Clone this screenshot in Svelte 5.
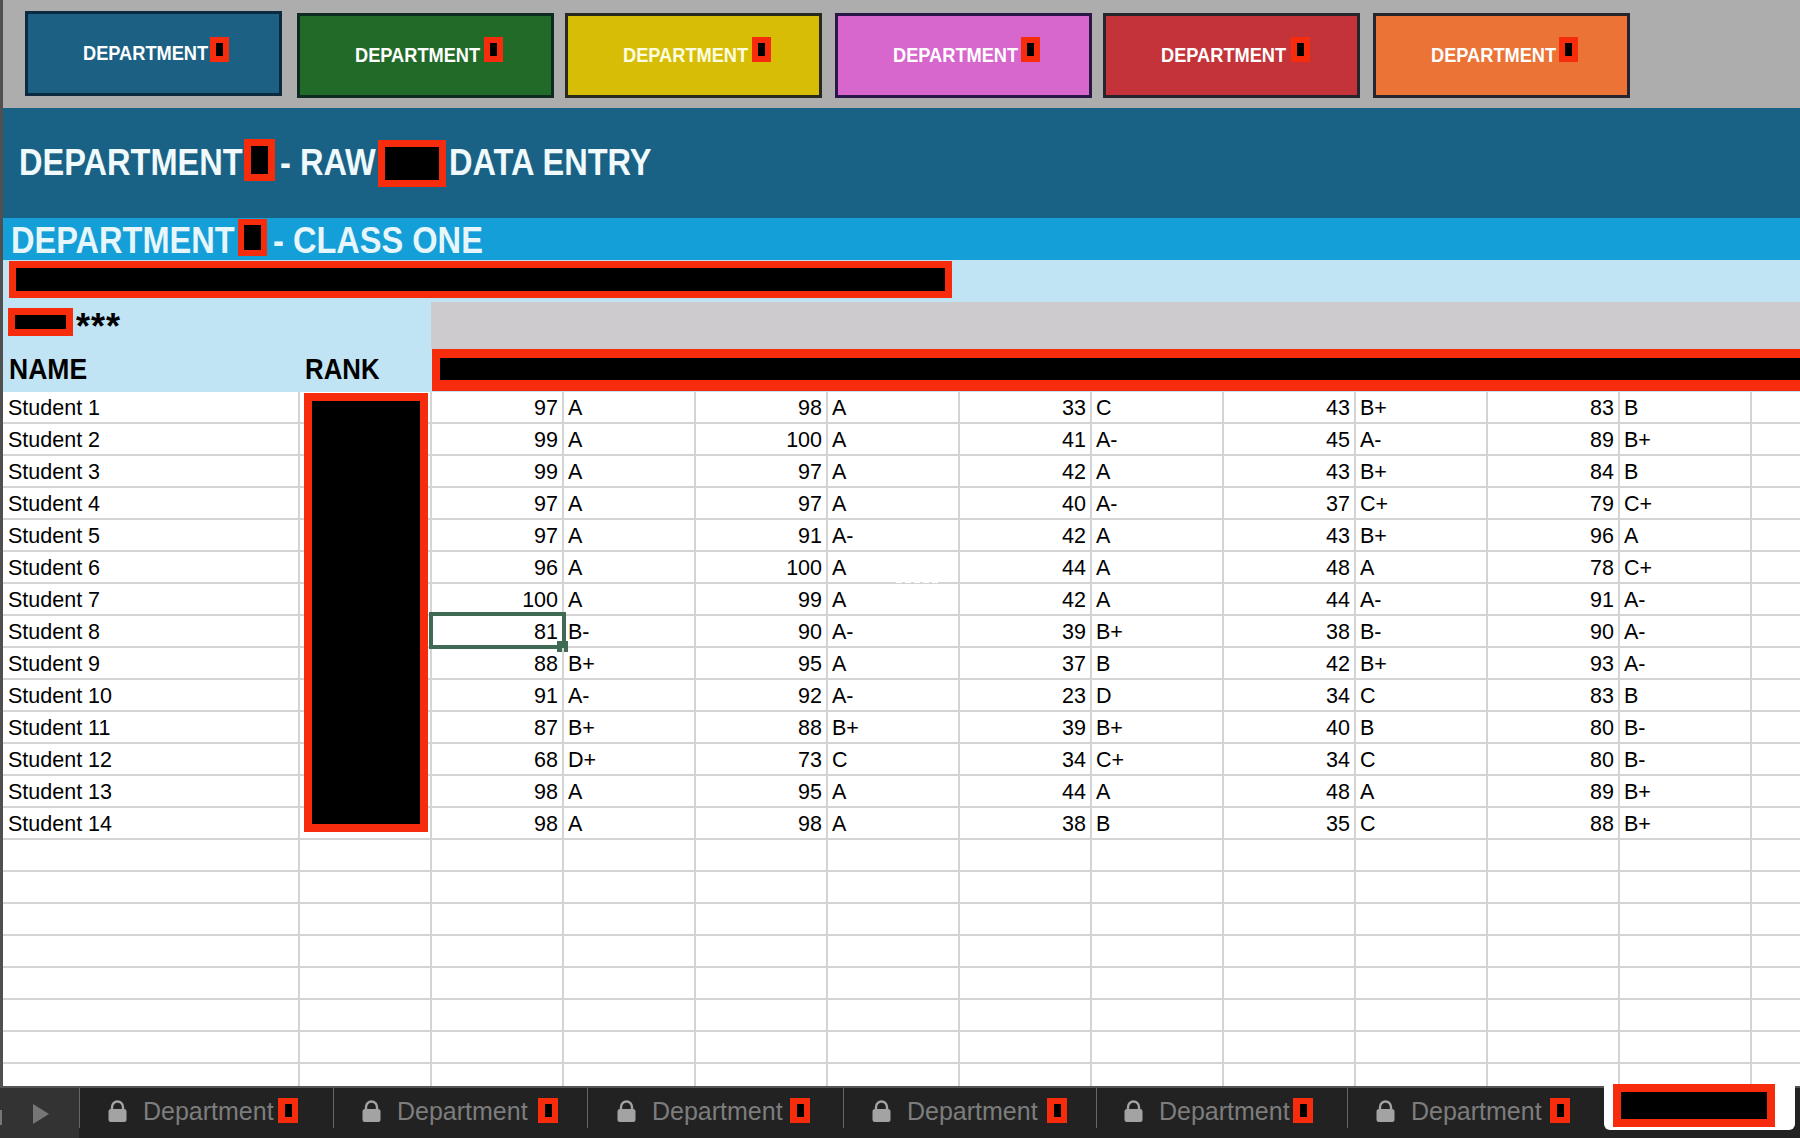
<script lang="ts">
	const buttons = [
		{ cls: 'blue', gap: 25, lift: true, redGap: 3 },
		{ cls: 'green', gap: 15, lift: false, redGap: 5 },
		{ cls: 'yellow', gap: 11, lift: false, redGap: 5 },
		{ cls: 'pink', gap: 13, lift: false, redGap: 4 },
		{ cls: 'red', gap: 11, lift: false, redGap: 6 },
		{ cls: 'orange', gap: 13, lift: false, redGap: 4 }
	];

	const raw = [
		'97 A,98 A,33 C,43 B+,83 B',
		'99 A,100 A,41 A-,45 A-,89 B+',
		'99 A,97 A,42 A,43 B+,84 B',
		'97 A,97 A,40 A-,37 C+,79 C+',
		'97 A,91 A-,42 A,43 B+,96 A',
		'96 A,100 A,44 A,48 A,78 C+',
		'100 A,99 A,42 A,44 A-,91 A-',
		'81 B-,90 A-,39 B+,38 B-,90 A-',
		'88 B+,95 A,37 B,42 B+,93 A-',
		'91 A-,92 A-,23 D,34 C,83 B',
		'87 B+,88 B+,39 B+,40 B,80 B-',
		'68 D+,73 C,34 C+,34 C,80 B-',
		'98 A,95 A,44 A,48 A,89 B+',
		'98 A,98 A,38 B,35 C,88 B+'
	];
	const students = raw.map((line, i) => ({
		name: `Student ${i + 1}`,
		marks: line.split(',').map((m) => m.split(' '))
	}));
	const blankRows = Array(8);
	const blankCells = Array(11);

	const tabs = [
		{ width: 254, pad: 29, gap: 4 },
		{ width: 254, pad: 29, gap: 10 },
		{ width: 256, pad: 30, gap: 7 },
		{ width: 253, pad: 29, gap: 9 },
		{ width: 251, pad: 28, gap: 3 },
		{ width: 257, pad: 29, gap: 8 }
	];
</script>

<div class="page">
	<div class="sheet">
		<div class="topbar">
			{#each buttons as b}
				<div class="btn {b.cls}" class:lift={b.lift} style="margin-left: {b.gap}px">
					<span class="btn-label">DEPARTMENT</span>
					<span class="redact tiny" style="margin-left: {b.redGap}px"></span>
				</div>
			{/each}
		</div>

		<div class="title">
			<span class="band w-dept">DEPARTMENT</span>
			<span class="redact title-a"></span>
			<span class="band w-raw">- RAW</span>
			<span class="redact title-b"></span>
			<span class="band w-entry">DATA ENTRY</span>
		</div>

		<div class="class-title">
			<span class="band w-dept">DEPARTMENT</span>
			<span class="redact class-a"></span>
			<span class="band w-class">- CLASS ONE</span>
		</div>

		<div class="note">
			<span class="redact note-bar"></span>
		</div>

		<div class="heads">
			<div class="heads-left">
				<div class="stars">
					<span class="redact stars-box"></span>
					<span class="stars-text">***</span>
				</div>
				<div class="col-names">
					<span class="col-name">NAME</span>
					<span class="col-rank">RANK</span>
				</div>
			</div>
			<div class="heads-right">
				<div class="gray"></div>
				<div class="redact heads-bar"></div>
			</div>
		</div>

		<div class="grid">
			{#each students as s, i}
				<div class="row">
					<div class="cell name">{s.name}</div>
					<div class="cell"></div>
					{#each s.marks as m, j}
						<div class="cell num" class:selected={i === 7 && j === 0}>{m[0]}</div>
						<div class="cell grade">{m[1]}</div>
					{/each}
					<div class="cell"></div>
				</div>
			{/each}
			{#each blankRows as _}
				<div class="row">
					<div class="cell name"></div>
					{#each blankCells as __}
						<div class="cell"></div>
					{/each}
					<div class="cell"></div>
				</div>
			{/each}
			<div class="redact rank-box"></div>
			<div class="row-mark"></div>
			<div class="smudge"></div>
		</div>
	</div>

	<div class="tabbar">
		<div class="scroller">
			<span class="scroller-edge"></span>
			<svg class="arrow" width="16" height="20" viewBox="0 0 16 20"><path d="M0 0 L16 10 L0 20 Z" fill="#767676" /></svg>
		</div>
		{#each tabs as t}
			<div class="tab" style="width: {t.width}px; padding-left: {t.pad}px">
				<svg class="lock" width="19" height="22" viewBox="0 0 19 22">
					<path d="M4 10 V7 a5.5 5.5 0 0 1 11 0 V10" fill="none" stroke="#a3a3a3" stroke-width="2.4" />
					<rect x="0.5" y="9" width="18" height="13" rx="2.5" fill="#a3a3a3" />
				</svg>
				<span class="tab-label">Department</span>
				<span class="redact tab-box" style="margin-left: {t.gap}px"></span>
			</div>
		{/each}
		<div class="tab-active">
			<span class="redact active-box"></span>
		</div>
	</div>
</div>

<style>
	:global(body) {
		margin: 0;
		background: #fff;
	}

	.page {
		width: 1800px;
		height: 1138px;
		display: flex;
		flex-direction: column;
		overflow: hidden;
		font-family: 'Liberation Sans', Arial, sans-serif;
		color: #000;
	}

	.sheet {
		flex: 1;
		min-height: 0;
		display: flex;
		flex-direction: column;
		border-left: 3px solid #505050;
		overflow: hidden;
	}

	.redact {
		display: block;
		box-sizing: border-box;
		flex: none;
		background: #000;
		border: 7px solid #f62c0d;
	}

	/* Department buttons */
	.topbar {
		height: 108px;
		flex: none;
		display: flex;
		align-items: flex-start;
		background: #adadad;
		margin-left: -3px;
	}

	.btn {
		box-sizing: border-box;
		width: 257px;
		height: 85px;
		margin-top: 13px;
		padding-left: 55px;
		display: flex;
		align-items: center;
		border: 3px solid #25252e;
	}

	.btn.lift {
		margin-top: 11px;
	}

	/* no condensed family is installed, so the labels are squeezed sideways */
	.btn-label {
		display: block;
		width: 124px;
		margin-bottom: 2px;
		font-weight: 700;
		font-size: 21px;
		white-space: nowrap;
		color: #fff;
		transform: scaleX(0.867);
		transform-origin: left center;
	}

	.blue { background: #1c6184; border-color: #0c2a3f; }
	.green { background: #216a28; border-color: #0e2b20; }
	.yellow { background: #d8bd06; border-color: #27291f; }
	.yellow .btn-label { color: #fdfde0; }
	.pink { background: #d767cc; border-color: #2b1648; }
	.red { background: #c43339; }
	.orange { background: #eb7335; }

	.tiny {
		width: 19px;
		height: 25px;
		margin-bottom: 12px;
		border-width: 6px;
	}

	.lift .tiny {
		margin-bottom: 8px;
	}

	/* Headline bands */
	.title {
		height: 110px;
		flex: none;
		box-sizing: border-box;
		padding-left: 16px;
		display: flex;
		align-items: center;
		background: #1a6285;
		color: #f0f9fb;
		font-weight: 700;
		font-size: 37px;
	}

	.band {
		display: block;
		flex: none;
		white-space: nowrap;
		transform: scaleX(0.88);
		transform-origin: left center;
	}

	.w-dept { width: 223px; }
	.w-raw { width: 96px; }
	.w-entry { width: 201px; }
	.w-class { width: 208px; }

	.title-a {
		width: 31px;
		height: 42px;
		margin: 0 5px 6px 2px;
	}

	.title-b {
		width: 68px;
		height: 47px;
		margin: 0 3px 0 2px;
	}

	.class-title {
		height: 42px;
		flex: none;
		box-sizing: border-box;
		padding: 3px 0 0 8px;
		display: flex;
		align-items: center;
		background: #159fd8;
		color: #e6f6fa;
		font-weight: 700;
		font-size: 37px;
	}

	.class-a {
		width: 29px;
		height: 37px;
		margin: 0 6px 6px 4px;
		border-width: 6px;
	}

	.note {
		height: 42px;
		flex: none;
		box-sizing: border-box;
		padding: 1px 0 0 6px;
		background: #c1e4f5;
	}

	.note-bar {
		width: 943px;
		height: 37px;
	}

	/* Column heads */
	.heads {
		height: 90px;
		flex: none;
		display: flex;
		background: #c1e4f5;
	}

	.heads-left {
		width: 428px;
		flex: none;
		display: flex;
		flex-direction: column;
	}

	.stars {
		height: 48px;
		box-sizing: border-box;
		padding: 6px 0 0 5px;
		display: flex;
		align-items: flex-start;
	}

	.stars-box {
		width: 65px;
		height: 28px;
	}

	.stars-text {
		margin-left: 3px;
		font-weight: 700;
		font-size: 36px;
		line-height: 38px;
		letter-spacing: 1px;
	}

	.col-names {
		display: flex;
		font-weight: 700;
		font-size: 29px;
		line-height: 38px;
	}

	.col-name {
		width: 302px;
		padding-left: 6px;
		box-sizing: border-box;
		transform: scaleX(0.915);
		transform-origin: 6px center;
	}

	.col-rank {
		transform: scaleX(0.89);
		transform-origin: left center;
	}

	.heads-right {
		flex: 1;
		min-width: 0;
		display: flex;
		flex-direction: column;
	}

	.gray {
		height: 47px;
		background: #cdcbcd;
	}

	.heads-bar {
		height: 42px;
		margin-left: 1px;
		border-width: 9px 0 11px 8px;
	}

	/* Data grid */
	.grid {
		position: relative;
		flex: 1;
		min-height: 0;
		background: #fff;
	}

	.row {
		display: flex;
		height: 32px;
	}

	.cell {
		width: 132px;
		height: 32px;
		flex: none;
		box-sizing: border-box;
		padding: 0 4px;
		border-right: 2px solid #d4d4d4;
		border-bottom: 2px solid #d4d4d4;
		font-size: 21.5px;
		line-height: 32px;
		white-space: nowrap;
	}

	.cell.name {
		width: 297px;
		padding-left: 5px;
	}

	.cell.num {
		position: relative;
		text-align: right;
	}

	.selected::before {
		content: '';
		position: absolute;
		inset: -4px -4px -3px -3px;
		border: 4px solid #3f6b54;
	}

	.selected::after {
		content: '';
		position: absolute;
		right: -6px;
		bottom: -6px;
		width: 11px;
		height: 11px;
		background: #3f6b54;
	}

	.rank-box {
		position: absolute;
		left: 301px;
		top: 1px;
		width: 124px;
		height: 439px;
		border-width: 8px;
	}

	.row-mark {
		position: absolute;
		left: -3px;
		top: 224px;
		width: 3px;
		height: 32px;
		background: #3f6b54;
	}

	.smudge {
		position: absolute;
		left: 893px;
		top: 189px;
		width: 45px;
		height: 2px;
		background: repeating-linear-gradient(90deg, #fff 0 6px, transparent 6px 9px);
	}

	/* Sheet tabs */
	.tabbar {
		position: relative;
		height: 52px;
		flex: none;
		box-sizing: border-box;
		display: flex;
		background: #222;
		border-top: 2px solid #555;
	}

	.scroller {
		width: 79px;
		flex: none;
		display: flex;
		align-items: flex-start;
		background: #333;
	}

	.scroller-edge {
		width: 2px;
		height: 15px;
		margin-top: 22px;
		background: #777;
	}

	.arrow {
		margin: 16px 0 0 31px;
	}

	.tab {
		height: 40px;
		flex: none;
		box-sizing: border-box;
		padding-top: 6px;
		display: flex;
		align-items: center;
		border-left: 1px solid #666;
	}

	.lock {
		flex: none;
		margin-left: -1px;
	}

	.tab-label {
		margin-left: 16px;
		font-size: 25px;
		color: #7d7d7d;
	}

	.tab-box {
		width: 20px;
		height: 25px;
		margin-bottom: 2px;
		border-width: 6px 6px 6px 7px;
	}

	.tab-active {
		display: flex;
		width: 191px;
		height: 44px;
		flex: none;
		margin-top: -2px;
		box-sizing: border-box;
		padding-left: 9px;
		background: #fff;
		border-radius: 0 0 6px 6px;
	}

	.active-box {
		width: 162px;
		height: 43px;
		margin-top: -2px;
		border-width: 8px;
	}
</style>
